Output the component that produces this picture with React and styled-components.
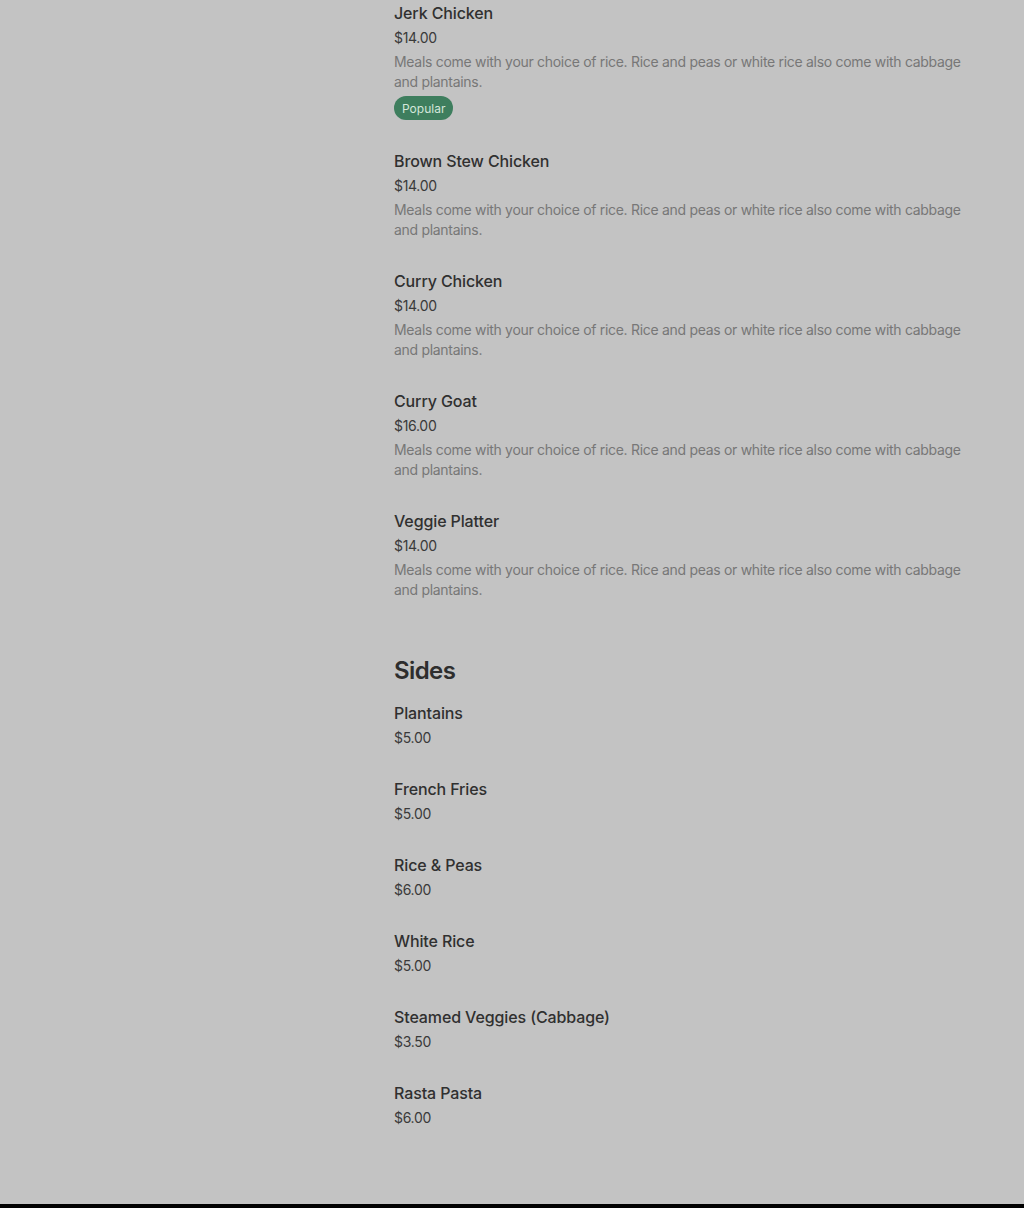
import React from 'react';
import styled, { createGlobalStyle } from 'styled-components';

const GlobalStyle = createGlobalStyle`
  html, body {
    margin: 0;
    padding: 0;
    background: #c3c3c3;
  }
  body {
    font-family: Inter, "Noto Sans", "Liberation Sans", sans-serif;
    -webkit-font-smoothing: antialiased;
  }
`;

const Page = styled.div`
  height: 1208px;
  display: flex;
  flex-direction: column;
  background: #c3c3c3;
  overflow: hidden;
`;

const Main = styled.main`
  flex: 1;
  padding: 1px 0 0 394px;
`;

const Section = styled.section`
  display: flex;
  flex-direction: column;
  gap: 29px;
  & + & {
    margin-top: 55px;
  }
`;

const SectionTitle = styled.h2`
  margin: 0 0 -15px;
  font-size: 24px;
  line-height: 32px;
  font-weight: 600;
  color: #2e2e2e;
  letter-spacing: -0.6px;
`;

const Item = styled.div`
  display: flex;
  flex-direction: column;
  align-items: flex-start;
  width: 580px;
`;

const Name = styled.div`
  font-size: 16px;
  line-height: 24px;
  font-weight: 500;
  color: #303030;
  letter-spacing: -0.12px;
`;

const Price = styled.div`
  margin-top: 3px;
  font-size: 14px;
  line-height: 20px;
  color: #3a3a3a;
  letter-spacing: -0.3px;
`;

const Desc = styled.p`
  margin: 4px 0 0;
  font-size: 14px;
  line-height: 20px;
  color: #777777;
  letter-spacing: -0.3px;
`;

const Badge = styled.span`
  margin-top: 4px;
  height: 24px;
  padding: 0 8px;
  display: inline-flex;
  align-items: center;
  border-radius: 12px;
  background: #3e7e5e;
  color: #d4e6da;
  font-size: 12px;
  font-weight: 400;
`;

const Bottom = styled.div`
  height: 4px;
  background: #000;
`;

const MEAL = 'Meals come with your choice of rice. Rice and peas or white rice also come with cabbage and plantains.';

const sections = [
  {
    items: [
      { name: 'Jerk Chicken', price: '$14.00', desc: MEAL, popular: true },
      { name: 'Brown Stew Chicken', price: '$14.00', desc: MEAL },
      { name: 'Curry Chicken', price: '$14.00', desc: MEAL },
      { name: 'Curry Goat', price: '$16.00', desc: MEAL },
      { name: 'Veggie Platter', price: '$14.00', desc: MEAL },
    ],
  },
  {
    title: 'Sides',
    items: [
      { name: 'Plantains', price: '$5.00' },
      { name: 'French Fries', price: '$5.00' },
      { name: 'Rice & Peas', price: '$6.00' },
      { name: 'White Rice', price: '$5.00' },
      { name: 'Steamed Veggies (Cabbage)', price: '$3.50' },
      { name: 'Rasta Pasta', price: '$6.00' },
    ],
  },
];

const App = () => {
  return (
    <Page>
      <GlobalStyle />
      <Main>
        {sections.map((s, i) => (
          <Section key={i}>
            {s.title && <SectionTitle>{s.title}</SectionTitle>}
            {s.items.map((it) => (
              <Item key={it.name}>
                <Name>{it.name}</Name>
                <Price>{it.price}</Price>
                {it.desc && <Desc>{it.desc}</Desc>}
                {it.popular && <Badge>Popular</Badge>}
              </Item>
            ))}
          </Section>
        ))}
      </Main>
      <Bottom />
    </Page>
  );
};

export default App;
